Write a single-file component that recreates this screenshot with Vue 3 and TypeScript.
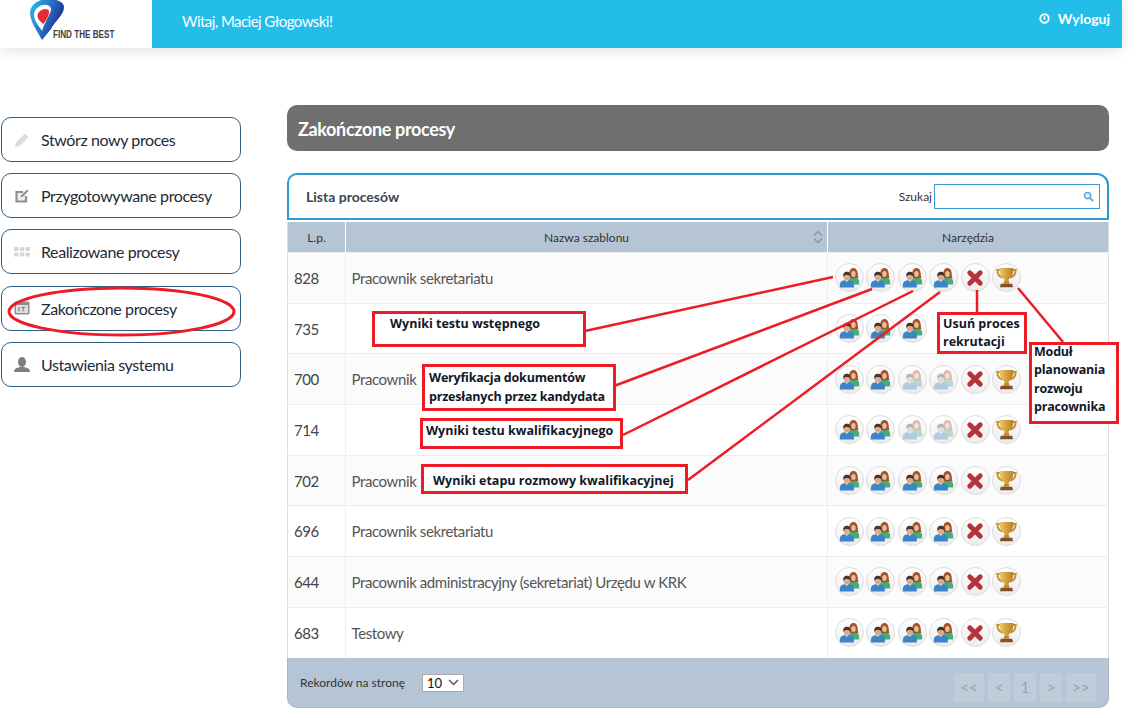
<script setup lang="ts">
type Row = { id: number; name: string; faded?: boolean; partial?: boolean }

const menu = [
  { label: 'Stwórz nowy proces', icon: 'pencil' },
  { label: 'Przygotowywane procesy', icon: 'edit' },
  { label: 'Realizowane procesy', icon: 'dots' },
  { label: 'Zakończone procesy', icon: 'calendar' },
  { label: 'Ustawienia systemu', icon: 'user' },
]

const rows: Row[] = [
  { id: 828, name: 'Pracownik sekretariatu' },
  { id: 735, name: '', partial: true },
  { id: 700, name: 'Pracownik', faded: true },
  { id: 714, name: '', faded: true },
  { id: 702, name: 'Pracownik' },
  { id: 696, name: 'Pracownik sekretariatu' },
  { id: 644, name: 'Pracownik administracyjny (sekretariat) Urzędu w KRK' },
  { id: 683, name: 'Testowy' },
]

const pages = ['<<', '<', '1', '>', '>>']

const lines = [
  [585, 331, 833, 277],
  [614, 386, 872, 289],
  [623, 435, 913, 291],
  [688, 480, 940, 292],
  [977, 290, 977, 313],
  [1018, 288, 1063, 342],
]
</script>

<template>
  <div class="page">
    <svg class="defs" width="0" height="0" aria-hidden="true">
      <defs>
        <linearGradient id="pinGrad" x1="0" y1="0" x2="1" y2="0.5">
          <stop offset="0" stop-color="#2cc4ec" />
          <stop offset="0.5" stop-color="#2a78c8" />
          <stop offset="1" stop-color="#1c2a8c" />
        </linearGradient>
        <linearGradient id="goldGrad" x1="0" y1="0" x2="1" y2="0">
          <stop offset="0" stop-color="#eecb72" />
          <stop offset="0.5" stop-color="#d3a23c" />
          <stop offset="1" stop-color="#b0822a" />
        </linearGradient>
        <symbol id="people" viewBox="0 0 24 24">
          <path d="M11 20v-4c0-2 2-3.500 4-4h3.500c3 .5 4.500 2 4.500 4.500V20z" fill="#45ad7c" />
          <path d="M11.500 8.500c0-4.500 2-7.500 5-7.500s5 3 5 7.500c0 2 .3 3 .8 4h-3.800l-2 1-2.500-1h-3c.5-1.500.5-2.500.5-4z" fill="#a3522f" />
          <ellipse cx="16.500" cy="8" rx="2.600" ry="3.400" fill="#e9bb9a" />
          <path d="M1 23.500V20c0-3 2.200-4.500 5.300-5h5.400c3 .5 5.300 2 5.300 5v3.500z" fill="#3c84c6" />
          <path d="M7.300 14.500L9 17.500l1.700-3z" fill="#dbe8f4" />
          <ellipse cx="9" cy="11" rx="3.700" ry="4.200" fill="#dfa987" />
          <path d="M5 11.500C4.200 7.500 6.300 5.500 9 5.500s4.800 2 4 6c-.6-1.800-2-2.500-4-2.500s-3.400.7-4 2.500z" fill="#43362e" />
        </symbol>
        <symbol id="cross" viewBox="0 0 24 24">
          <path d="M5 5l14 14M19 5L5 19" stroke="#b5333b" stroke-width="6.500" stroke-linecap="round" />
        </symbol>
        <symbol id="trophy" viewBox="0 0 24 24">
          <path d="M5.500 3.500H1.500c0 4.500 2 7.500 6 8.500M18.500 3.500h4c0 4.500-2 7.500-6 8.500" fill="none" stroke="#c2923a" stroke-width="2.200" />
          <path d="M4 1h16c0 6.500-1.800 11-5.500 13v2.500h-5V14C5.800 12 4 7.500 4 1z" fill="url(#goldGrad)" />
          <path d="M9.500 16h5l1 3h-7z" fill="#bb8a2e" />
          <path d="M5.500 19h13l1 4h-15z" fill="#84502a" />
        </symbol>
      </defs>
    </svg>

    <header class="topbar">
      <div class="logo">
        <svg width="116" height="48" viewBox="0 0 116 48">
          <path d="M30 13C30 5 38-1 48-1c9 0 16 3 16 8 0 8-9 14-13 22l-9 11C37 31 30 21 30 13z" fill="url(#pinGrad)" />
          <path d="M34 15c0-6 6-11 13-10 4 1 5 4 3 8-2 5-5 9-8 18-3-5-8-10-8-16z" fill="#fff" />
          <path d="M37.500 16c0-4 4-7 8-7 4 0 4 3 3 6-1 3-3 6-5 9-3-2-6-5-6-8z" fill="#e52b33" />
          <text x="71.600" y="38" transform="scale(0.74 1)" class="logo-text">FIND THE BEST</text>
        </svg>
      </div>
      <div class="bluebar">
        <span class="welcome">Witaj, Maciej Głogowski!</span>
        <a class="logout">
          <svg width="11" height="11" viewBox="0 0 12 12">
            <circle cx="6" cy="6" r="4.600" fill="none" stroke="#fff" stroke-width="2" />
            <path d="M6 3.500v4" stroke="#fff" stroke-width="1.600" />
          </svg>
          Wyloguj
        </a>
      </div>
    </header>

    <div class="content">
      <nav class="sidebar">
        <a v-for="item in menu" :key="item.label" class="menu-item">
          <span class="menu-icon">
            <svg v-if="item.icon === 'pencil'" width="16" height="16" viewBox="0 0 16 16">
              <path d="M1 15l1-4.500L11 1.500l3.500 3.500-9 9z" fill="#dcdcdc" />
            </svg>
            <svg v-else-if="item.icon === 'edit'" width="16" height="16" viewBox="0 0 16 16">
              <path d="M12 8v5.500H2.500V4H9" fill="#eee" stroke="#8f8f8f" stroke-width="2.200" />
              <path d="M6.500 9.500l.5-2L13 1.500l1.500 1.500-6 6z" fill="#8f8f8f" />
            </svg>
            <svg v-else-if="item.icon === 'dots'" width="16" height="10" viewBox="0 0 16 10">
              <g fill="#d6d6d6">
                <rect x="0" y="0" width="4.500" height="4" rx="1" />
                <rect x="5.700" y="0" width="4.500" height="4" rx="1" />
                <rect x="11.400" y="0" width="4.500" height="4" rx="1" />
                <rect x="0" y="5.500" width="4.500" height="4" rx="1" />
                <rect x="5.700" y="5.500" width="4.500" height="4" rx="1" />
                <rect x="11.400" y="5.500" width="4.500" height="4" rx="1" />
              </g>
            </svg>
            <svg v-else-if="item.icon === 'calendar'" width="16" height="14" viewBox="0 0 16 14">
              <rect x="0.500" y="0.500" width="15" height="13" rx="1.500" fill="#8e8e8e" />
              <rect x="2" y="4" width="12" height="8" fill="#dedede" />
              <path d="M5 6v4.500M7.500 6.500h3.500M9.200 6.500v4" stroke="#777" stroke-width="1" fill="none" />
            </svg>
            <svg v-else width="18" height="15" viewBox="0 0 18 15">
              <ellipse cx="9" cy="5" rx="4" ry="5" fill="#7e7e7e" />
              <path d="M1 15c0-3 2-4 6-5h4c4 1 6 2 6 5z" fill="#7e7e7e" />
            </svg>
          </span>
          <span>{{ item.label }}</span>
        </a>
      </nav>

      <main class="main">
        <h1 class="title">Zakończone procesy</h1>

        <section class="panel">
          <div class="panel-head">
            <h2>Lista procesów</h2>
            <label class="search">
              <span>Szukaj</span>
              <span class="search-box">
                <svg width="11" height="11" viewBox="0 0 12 12">
                  <circle cx="5" cy="5" r="3.400" fill="#dff0fa" stroke="#58a9d6" stroke-width="1.600" />
                  <path d="M7.500 7.500l3.500 3.500" stroke="#58a9d6" stroke-width="2" />
                </svg>
              </span>
            </label>
          </div>

          <table class="grid">
            <colgroup>
              <col class="col-id" />
              <col />
              <col class="col-tools" />
            </colgroup>
            <thead>
              <tr>
                <th>L.p.</th>
                <th class="sortable">
                  Nazwa szablonu
                  <svg class="sort" width="10" height="14" viewBox="0 0 10 14">
                    <path d="M1 5.500L5 1.500l4 4M1 8.500l4 4 4-4" fill="none" stroke="#8b9cb0" stroke-width="1.600" />
                  </svg>
                </th>
                <th>Narzędzia</th>
              </tr>
            </thead>
            <tbody>
              <tr v-for="row in rows" :key="row.id">
                <td class="num">{{ row.id }}</td>
                <td class="name">{{ row.name }}</td>
                <td>
                  <div class="tools">
                    <span v-for="n in row.partial ? 3 : 4" :key="n" class="tool" :class="{ faded: row.faded && n > 2 }">
                      <svg width="21" height="21"><use href="#people" /></svg>
                    </span>
                    <template v-if="!row.partial">
                      <span class="tool"><svg width="18" height="18"><use href="#cross" /></svg></span>
                      <span class="tool"><svg width="21" height="21"><use href="#trophy" /></svg></span>
                    </template>
                  </div>
                </td>
              </tr>
            </tbody>
          </table>

          <div class="panel-foot">
            <span>Rekordów na stronę</span>
            <div class="per-page">
              <span>10</span>
              <svg width="11" height="7" viewBox="0 0 11 7">
                <path d="M1 1l4.500 4.500L10 1" fill="none" stroke="#555" stroke-width="1.500" />
              </svg>
            </div>
            <div class="pager">
              <span v-for="p in pages" :key="p" class="page-btn" :class="{ wide: p.length > 1 }">{{ p }}</span>
            </div>
          </div>
        </section>
      </main>
    </div>

    <svg class="marks" width="1141" height="718" viewBox="0 0 1141 718">
      <ellipse cx="121.500" cy="311.500" rx="112.500" ry="23.500" fill="none" stroke="#ed1c24" stroke-width="3" />
      <line
        v-for="(l, i) in lines"
        :key="i"
        :x1="l[0]"
        :y1="l[1]"
        :x2="l[2]"
        :y2="l[3]"
        stroke="#ed1c24"
        stroke-width="2.500"
      />
    </svg>

    <div class="note n1">Wyniki testu wstępnego</div>
    <div class="note n2">Weryfikacja dokumentów<br />przesłanych przez kandydata</div>
    <div class="note n3">Wyniki testu kwalifikacyjnego</div>
    <div class="note n4">Wyniki etapu rozmowy kwalifikacyjnej</div>
    <div class="note n5">Usuń proces<br />rekrutacji</div>
    <div class="note n6"><span>Moduł<br />planowania<br />rozwoju<br />pracownika</span></div>
  </div>
</template>

<style>
html,
body {
  background: #fff;
}
</style>

<style scoped>
.page {
  position: relative;
  width: 1122px;
  height: 718px;
  overflow: visible;
  font-family: Lato, "Noto Sans", sans-serif;
  color: #333;
}

.defs {
  position: absolute;
}

.topbar {
  display: flex;
  height: 48px;
  box-shadow: 0 2px 14px rgba(0, 0, 0, 0.12);
}

.logo {
  width: 152px;
  background: #fff;
  overflow: hidden;
}

.logo-text {
  font-family: "Liberation Sans", sans-serif;
  font-size: 11px;
  font-weight: 700;
  fill: #3d3d46;
}

.bluebar {
  flex: 1;
  display: flex;
  justify-content: space-between;
  background: #22bde8;
  color: #fff;
  padding: 0 12px 0 30px;
}

.welcome {
  font-size: 15px;
  letter-spacing: -0.55px;
  line-height: 43px;
}

.logout {
  display: flex;
  align-items: center;
  gap: 8px;
  height: 36px;
  font-size: 14px;
  font-weight: 700;
}

.content {
  display: flex;
  align-items: flex-start;
  padding: 57px 13px 0 1px;
}

.sidebar {
  width: 240px;
  display: flex;
  flex-direction: column;
  gap: 11.200px;
  padding-top: 12px;
  flex: none;
}

.menu-item {
  display: flex;
  align-items: center;
  box-sizing: border-box;
  height: 45px;
  border: 1px solid #2d5f86;
  border-radius: 10px;
  font-size: 16px;
  letter-spacing: -0.4px;
  color: #1d2a38;
}

.menu-icon {
  display: flex;
  justify-content: center;
  align-items: center;
  width: 39px;
}

.main {
  flex: 1;
  margin-left: 46px;
  min-width: 0;
}

.title {
  margin: 0 0 22px;
  height: 46px;
  padding-left: 11px;
  background: #6f6f6f;
  border-radius: 10px;
  color: #fff;
  font-size: 18px;
  font-weight: 700;
  letter-spacing: -0.35px;
  line-height: 48px;
}

.panel {
  box-sizing: border-box;
  width: 822px;
  border-radius: 0 12px 10px 10px;
}

.panel-head {
  display: flex;
  align-items: center;
  justify-content: space-between;
  box-sizing: border-box;
  height: 47px;
  padding: 0 7px 0 17px;
  border: 2px solid #2e9ad0;
  border-radius: 10px 12px 0 0;
}

.panel-head h2 {
  margin: 0;
  font-size: 14px;
  font-weight: 700;
  color: #3a4654;
}

.search {
  display: flex;
  align-items: center;
  gap: 2px;
  font-size: 12px;
  color: #333;
}

.search-box {
  display: flex;
  align-items: center;
  justify-content: flex-end;
  box-sizing: border-box;
  width: 166px;
  height: 25px;
  padding-right: 5px;
  border: 1px solid #3a9ad0;
  background: #fff;
}

.grid {
  width: 100%;
  margin-top: 2px;
  border-collapse: collapse;
  table-layout: fixed;
  border-left: 1px solid #ddd;
  border-right: 1px solid #ddd;
}

.col-id {
  width: 58px;
}

.col-tools {
  width: 281px;
}

.grid th {
  position: relative;
  height: 30px;
  padding: 0;
  background: #b6c5d6;
  border-left: 1px solid #fff;
  font-size: 12px;
  font-weight: 400;
  color: #333;
}

.grid th:first-child {
  border-left: 0;
}

.sort {
  position: absolute;
  right: 4px;
  top: 8px;
}

.grid td {
  height: 50.700px;
  padding: 0;
  border-top: 1px solid #eee;
  border-left: 1px solid #eee;
  box-sizing: border-box;
  font-size: 15px;
  letter-spacing: -0.4px;
}

.grid td:first-child {
  border-left: 0;
}

.grid tbody tr:nth-child(odd) td {
  background: #fbfbfb;
}

.num {
  padding-left: 6px !important;
  color: #444;
}

.name {
  padding-left: 5.500px !important;
  color: #555;
}

.tools {
  display: flex;
  gap: 2.400px;
  padding-left: 7px;
}

.tool {
  display: flex;
  align-items: center;
  justify-content: center;
  box-sizing: border-box;
  width: 29px;
  height: 29px;
  border: 1px solid #dcdcdc;
  border-radius: 50%;
  background: linear-gradient(#fff, #ececec);
}

.tool.faded svg {
  opacity: 0.35;
}

.panel-foot {
  display: flex;
  align-items: center;
  height: 50px;
  padding: 0 12px;
  background: #b6c5d6;
  border-radius: 0 0 10px 10px;
  border: 1px solid #a9b8c9;
  border-top: 0;
  box-sizing: border-box;
  font-size: 12px;
  color: #333;
}

.per-page {
  display: flex;
  align-items: center;
  justify-content: space-between;
  box-sizing: border-box;
  width: 42px;
  height: 18px;
  margin-left: 17px;
  padding: 0 4px;
  border: 1px solid #aaa;
  background: #fff;
  font-size: 13px;
  color: #111;
}

.pager {
  display: flex;
  gap: 4px;
  margin-left: auto;
  margin-top: 9px;
}

.page-btn {
  width: 22px;
  height: 29px;
  background: #c0ccd9;
  color: #97a3b0;
  font-size: 15px;
  line-height: 29px;
  text-align: center;
}

.page-btn.wide {
  width: 30px;
}

.marks {
  position: absolute;
  left: 0;
  top: 0;
  pointer-events: none;
}

.note {
  position: absolute;
  box-sizing: border-box;
  border: 3px solid #ed1c24;
  background: #fff;
  color: #101828;
  font-family: "Open Sans", sans-serif;
  font-size: 12.500px;
  font-weight: 700;
  line-height: 18px;
  white-space: nowrap;
}

.n1 {
  left: 372px;
  top: 311px;
  width: 214px;
  height: 36px;
  padding: 1px 0 0 15px;
}

.n2 {
  left: 422px;
  top: 364px;
  width: 194px;
  height: 47px;
  padding: 1px 0 0 4px;
  line-height: 19px;
  letter-spacing: -0.2px;
}

.n3 {
  left: 420px;
  top: 418px;
  width: 203px;
  height: 31px;
  padding: 1px 0 0 3px;
}

.n4 {
  left: 421px;
  top: 464px;
  width: 267px;
  height: 30px;
  padding: 5px 0 0 9px;
}

.n5 {
  left: 937px;
  top: 312px;
  width: 90px;
  height: 42px;
  padding: 0 0 0 3px;
}

.n6 {
  left: 1029px;
  top: 342px;
  width: 90px;
  height: 82px;
  padding: 0 0 0 2px;
  letter-spacing: -0.2px;
  line-height: 18.300px;
}

.n6 span {
  display: block;
  margin-top: -2px;
}
</style>
